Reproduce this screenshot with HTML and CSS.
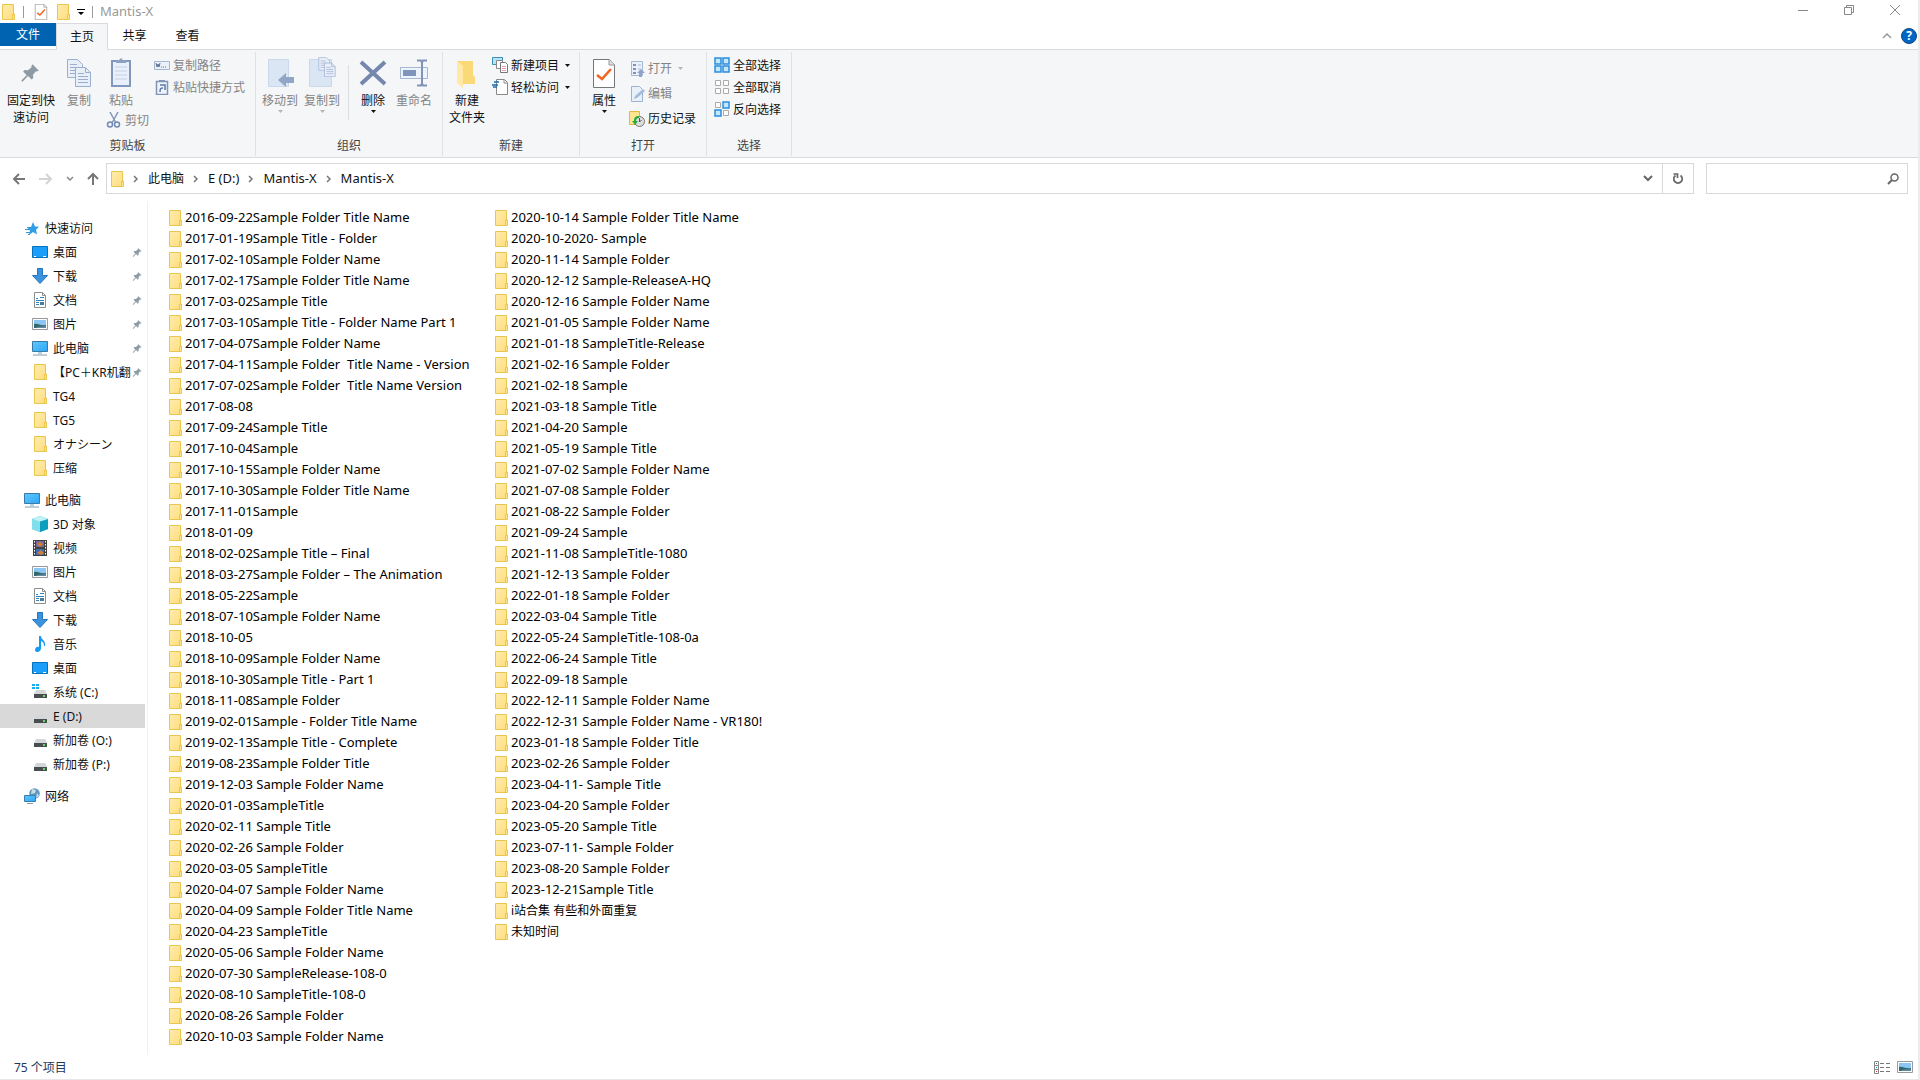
FILE: index.html
```html
<!DOCTYPE html>
<html lang="zh-CN">
<head>
<meta charset="utf-8">
<title>Mantis-X</title>
<link rel="stylesheet" href="styles.css">
</head>
<body>
<svg class="defs" aria-hidden="true">
  <linearGradient id="gold" x1="0" y1="0" x2="1" y2="1"><stop offset="0" stop-color="#ffebae"/><stop offset="1" stop-color="#ffde7c"/></linearGradient>
  <linearGradient id="screen" x1="0" y1="0" x2="1" y2="1"><stop offset="0" stop-color="#5fc8ff"/><stop offset="1" stop-color="#2fa5f5"/></linearGradient>
  <symbol id="folder" viewBox="0 0 16 16"><path d="M2.500.5h11v9.500h1v5.500h-12z" fill="url(#gold)" stroke="#e8c650"/><path d="M12.500 15v-4.500h2V15" fill="#ffe58f" stroke="#e8c650"/></symbol>
  <symbol id="pin" viewBox="0 0 16 16"><path d="M10 1l5 5-1.500.8-.8-.3-2.300 2.800.2 2.700-1.300 1.200-2.900-2.900L2 15l-1-1 4.300-4.300L2.500 6.800l1.200-1.300 2.700.2L9.300 3.300 9 2.500z" fill="#8e9ba4"/></symbol>
  <symbol id="desktop" viewBox="0 0 16 16"><path d="M.5 2.500h15v11H.5z" fill="#1aa0fb" stroke="#0670b8"/><path d="M2 12.500h2m7 0h3" stroke="#fff"/></symbol>
  <symbol id="down" viewBox="0 0 16 16"><path d="M5.500.5h5v7h5L8 15.500.5 7.500h5z" fill="#3b93e0" stroke="#2474ba"/></symbol>
  <symbol id="doc" viewBox="0 0 16 16"><path d="M2.500.5h8l3 3v12h-11z" fill="#fff" stroke="#8d8d8d"/><path d="M10.500.5v3h3" fill="none" stroke="#8d8d8d"/><path d="M4 6.500h2m2-1h4M4 8.500h8m-8 2h3m-3 2h3" stroke="#3185c0"/><path d="M8 10h4v3H8z" fill="#477c94"/></symbol>
  <symbol id="picture" viewBox="0 0 16 16"><path d="M.5 2.500h15v11H.5z" fill="#fff" stroke="#969ba0"/><path d="M2 4h12v8H2z" fill="#8cc7f4"/><path d="M2 8c4-1 6 2 12 1v3H2z" fill="#31686b"/><path d="M5 11c3-1 5 0 9-1v2H4z" fill="#6389a0"/></symbol>
  <symbol id="pc" viewBox="0 0 16 16"><path d="M.5 1.500h15v10H.5z" fill="url(#screen)" stroke="#3a7ba5"/><path d="M6 13h4" stroke="#69a9cc"/><path d="M1 15h14" stroke="#829aab"/></symbol>
  <symbol id="cube" viewBox="0 0 16 16"><path d="M8 0l8 3v10l-8 3-8-3V3z" fill="#2cb7cf"/><path d="M0 3l8 2v11l-8-3z" fill="#80dfea"/><path d="M8 5l8-2v10l-8 3z" fill="#0b9fbd"/><path d="M0 3l8-3 8 3-8 2.500z" fill="#c2f2f7"/></symbol>
  <symbol id="film" viewBox="0 0 16 16"><path d="M1 0h14v16H1z" fill="#404040"/><path d="M4 1h8v6H4z" fill="#76699b"/><path d="M4 9h8v6H4z" fill="#406dae"/><path d="M5 4l3-2 3 2-3 3zM5 13l4-3 3 3-3 2z" fill="#d47d39"/><path d="M2.500 1v15m11-15v15" stroke="#fff" stroke-dasharray="1.500"/></symbol>
  <symbol id="music" viewBox="0 0 16 16"><path d="M7 0h2c0 4 5 4 4 10h-1c0-3-1-4-3-5v7c0 5-6 5-6 2s3-4 4-3z" fill="#159bf2"/></symbol>
  <symbol id="drive" viewBox="0 0 16 16"><path d="M4 7h9l2 4H2z" fill="#d4d6d8"/><path d="M2 11h13v4H2z" fill="#4a4d50"/><path d="M11 12h2v2h-2z" fill="#62dd61"/></symbol>
  <symbol id="sysdrive" viewBox="0 0 16 16"><path d="M0 0h3v2H0zm4 0h3v2H4zM0 3h3v2H0zm4 0h3v2H4z" fill="#12aef0"/><path d="M4 6h9l2 4H2z" fill="#d4d6d8"/><path d="M2 10h13v4H2z" fill="#4a4d50"/><path d="M11 11h2v2h-2z" fill="#62dd61"/></symbol>
  <symbol id="star" viewBox="0 0 16 16"><path d="M9 2l2 4.500 4 .3-3 3 1 4.700-4-2.500L5 15l1-4.500-3-3L7 7z" fill="#2e9ee8"/><path d="M1 9.500h5M3 7.500h4M2 12.500h4M4 14.500h2" stroke="#3a96d1"/></symbol>
  <symbol id="network" viewBox="0 0 16 16"><circle cx="10.500" cy="5.500" r="5.300" fill="#6198bb"/><path d="M8 1l4 1-1 3-4 1zM13 5l2 3-3 2z" fill="#c5dde8"/><path d="M.5 7.500h11v6H.5z" fill="url(#screen)" stroke="#377fac"/><path d="M3 15.500h6" stroke="#85a1b5"/></symbol>
  <symbol id="check" viewBox="0 0 22 29"><path d="M.5.5h16l5 5v23H.5z" fill="#fff" stroke="#777"/><path d="M16 0v6h6" fill="#ddd" stroke="#999"/><path d="M4 16l5 4 9-10" fill="none" stroke="#f26522" stroke-width="2.600"/></symbol>
  <symbol id="pages" viewBox="0 0 24 28"><path d="M.5.5h10l5 5v13H.5z" fill="#e8eff9" stroke="#9caed0"/><path d="M3 5.500h7M3 8.500h9M3 11.500h6M3 14.500h6" stroke="#9caed0"/><path d="M8.500 8.500h10l5 5v14h-15z" fill="#e8eff9" stroke="#9caed0"/><path d="M18.500 8.500v5h5M11 14.500h6M11 17.500h10M11 20.500h10M11 23.500h10" fill="none" stroke="#9caed0"/></symbol>
  <symbol id="caret" viewBox="0 0 5 3"><path d="M0 0h5L2.500 3z" fill="currentColor"/></symbol>
  <symbol id="chev" viewBox="0 0 6 8"><path d="M1 1l3 3-3 3" fill="none" stroke="#777" stroke-width="1.500"/></symbol>
</svg>
<div class="window">
  <header class="titlebar">
    <div class="quick">
      <svg class="i16"><use href="#folder"/></svg><span class="bar"></span>
      <svg class="i16"><use href="#check"/></svg><svg class="i16"><use href="#folder"/></svg>
      <svg class="i8" viewBox="0 0 8 6"><path d="M0 0h8v1H0zM1 3h6L4 6z"/></svg><span class="bar"></span>
      <h1>Mantis-X</h1>
    </div>
    <div class="controls">
      <button aria-label="最小化"><svg viewBox="0 0 10 10"><path d="M0 5.500h10"/></svg></button>
      <button aria-label="还原"><svg viewBox="0 0 10 10"><path d="M.5 2.500h7v7h-7zM2.500 2.500v-2h7v7h-2"/></svg></button>
      <button aria-label="关闭"><svg viewBox="0 0 10 10"><path d="M0 0l10 10M10 0L0 10"/></svg></button>
    </div>
  </header>
  <div class="tabs">
    <button class="tab file">文件</button><button class="tab active">主页</button><button class="tab">共享</button><button class="tab">查看</button>
    <div class="help"><button aria-label="折叠功能区"><svg width="10" height="6" viewBox="0 0 10 6"><path d="M1 5l4-4 4 4" fill="none" stroke="#999" stroke-width="1.500"/></svg></button><button class="question" aria-label="帮助">?</button></div>
  </div>
  <div class="ribbon">
    <section class="group clip"><div class="tools">
      <button class="big pinbtn"><svg class="i32" viewBox="-5 -6 32 32"><use href="#pin" width="20" height="22"/></svg><span>固定到快<br>速访问</span></button>
      <button class="big" disabled><svg class="i32" viewBox="-4 -3 32 32"><use href="#pages" width="24" height="28"/></svg><span>复制</span></button>
      <div class="paste">
        <button class="big" disabled><svg class="i32" viewBox="0 0 32 32"><path d="M7 5h18v25H7z" fill="#e9f0fa" stroke="#8297bd" stroke-width="2"/><path d="M11 7V4h3l2-2 2 2h3v3z" fill="#8ea0c0"/><path d="M10 11h12m-12 4h12m-12 4h12m-12 4h12" stroke="#c4d1e5"/></svg><span>粘贴</span></button>
        <button class="small" disabled><svg class="i16" viewBox="0 0 16 16"><path d="M4 0l6 11M12 0L6 11" stroke="#8297b8" stroke-width="1.500"/><circle cx="4" cy="12.500" r="2.500" fill="none" stroke="#7189b5" stroke-width="1.500"/><circle cx="11" cy="12.500" r="2.500" fill="none" stroke="#7189b5" stroke-width="1.500"/></svg>剪切</button>
      </div>
      <div class="stack">
        <button class="small" disabled><svg class="i16" viewBox="0 0 16 16"><path d="M.5 4.500h15v8H.5z" fill="#e9f1fa" stroke="#a3b6d2"/><path d="M2 6l1 4 1-3 1 3 1-4m1 4h1m1 0h1m1 0h1" fill="none" stroke="#5b7190"/></svg>复制路径</button>
        <button class="small" disabled><svg class="i16" viewBox="0 0 16 16"><path d="M2.500 2.500h11v13h-11z" fill="#eef4fc" stroke="#8094b7" stroke-width="1.500"/><path d="M5 1h6v2H5z" fill="#8094b7"/><path d="M6 13c0-4 1-4 3-4M6 6h5v5" fill="none" stroke="#5c78a5" stroke-width="1.500"/></svg>粘贴快捷方式</button>
      </div></div><h2>剪贴板</h2></section>
    <section class="group org"><div class="tools">
      <button class="big" disabled><svg class="i32" viewBox="0 0 32 32"><path d="M4.500 3.500h20v27h-20z" fill="#dbe6f5" stroke="#cbd8ec"/><path d="M14 24l8-7v4h8v6h-8v4z" fill="#91a5c6"/></svg><span>移动到</span><svg class="caret"><use href="#caret"/></svg></button>
      <button class="big" disabled><svg class="i32" viewBox="0 0 32 32"><path d="M3.500 3.500h22v27h-22z" fill="#dbe6f5" stroke="#cbd8ec"/><use href="#pages" x="12" y="1" width="18" height="20"/></svg><span>复制到</span><svg class="caret"><use href="#caret"/></svg></button>
      <span class="rule"></span>
      <button class="big delete"><svg class="i32" viewBox="0 0 32 32"><path d="M4 6l24 22M28 6L4 28" stroke="#7587ad" stroke-width="4"/></svg><span>删除</span><svg class="caret"><use href="#caret"/></svg></button>
      <button class="big" disabled><svg class="i32" viewBox="0 0 32 32"><path d="M2.500 11.500h27v11h-27z" fill="#eef4fc" stroke="#a6b7d3"/><path d="M5 14h13v6H5z" fill="#7e94bb"/><path d="M19 4.500h4l1 2 1-2h4M24 6v22m-5 1.500h4l1-2 1 2h4" fill="none" stroke="#8094ba" stroke-width="2"/></svg><span>重命名</span></button>
      </div><h2>组织</h2></section>
    <section class="group new"><div class="tools">
      <button class="big"><svg class="i32" viewBox="0 0 32 32"><path d="M6 5h16v14l2 2v7H11z" fill="#fad978"/><path d="M6 5l6 5v22l-6-5z" fill="#ffe9a5"/></svg><span>新建<br>文件夹</span></button>
      <div class="stack">
        <button class="small"><svg class="i16" viewBox="0 0 16 16"><path d="M.5.5h10v7H.5z" fill="#b7e4f4" stroke="#3990b6"/><path d="M4.500 3.500h6v8h-6z" fill="#fff" stroke="#888"/><path d="M8.500 5.500h5l2 2v8h-7z" fill="#fff" stroke="#777"/><path d="M10 9.500h4m-4 2h4m-4 2h4" stroke="#db9cad"/></svg>新建项目<svg class="caret"><use href="#caret"/></svg></button>
        <button class="small"><svg class="i16" viewBox="0 0 16 16"><path d="M4.500.5h8l3 3v12h-11z" fill="#fff" stroke="#888"/><path d="M12 1v3h3" fill="none" stroke="#888"/><path d="M2 3h5M0 6h6M1 8h4" stroke="#176cb2" stroke-width="1.500"/></svg>轻松访问<svg class="caret"><use href="#caret"/></svg></button>
      </div></div><h2>新建</h2></section>
    <section class="group open"><div class="tools">
      <button class="big"><svg class="i32" viewBox="-5 -3 32 32"><use href="#check" width="22" height="29"/></svg><span>属性</span><svg class="caret"><use href="#caret"/></svg></button>
      <div class="stack loose">
        <button class="small" disabled><svg class="i16" viewBox="0 0 16 16"><path d="M2.500.5h11v14h-11z" fill="#eaf1fb" stroke="#a5b7d3"/><path d="M4 3h3v2H4zm0 4h3v2H4zm0 4h3v2H4z" fill="#7c94bd"/><path d="M9 4h3M9 8h3" stroke="#a5b7d3"/><path d="M12 8l4 4h-3v4h-3v-4H8z" fill="#8fa4c7"/></svg>打开<svg class="caret"><use href="#caret"/></svg></button>
        <button class="small" disabled><svg class="i16" viewBox="0 0 16 16"><path d="M2.500.5h8l3 3v12h-11z" fill="#e8f0fa" stroke="#9fb2d1"/><path d="M5 13l1-3 8-7 2 2-8 7z" fill="#a7bcda"/></svg>编辑</button>
        <button class="small"><svg class="i16" viewBox="0 0 16 16"><path d="M.5.5h10v13H.5z" fill="#ffe58f" stroke="#e1b93f"/><circle cx="10.500" cy="10.500" r="5" fill="#ddd" stroke="#777"/><path d="M10.500 7v4l2-2" fill="none" stroke="#555"/><path d="M10 5c-4 0-5 2-5 5H3l3 4 3-4H7c0-2 1-3 3-3z" fill="#29ad3a"/></svg>历史记录</button>
      </div></div><h2>打开</h2></section>
    <section class="group select"><div class="tools"><div class="stack">
        <button class="small"><svg class="i16" viewBox="0 0 16 16"><path d="M1 1h6v6H1zm8 0h6v6H9zM1 9h6v6H1zm8 0h6v6H9z" fill="#c3e7fd" stroke="#2b8ddc" stroke-width="1.500"/></svg>全部选择</button>
        <button class="small"><svg class="i16" viewBox="0 0 16 16"><path d="M1.500 1.500h5v5h-5zm8 0h5v5h-5zM1.500 9.500h5v5h-5zm8 0h5v5h-5z" fill="#fff" stroke="#aaa"/></svg>全部取消</button>
        <button class="small"><svg class="i16" viewBox="0 0 16 16"><path d="M1.500 1.500h5v5h-5zm8 8h5v5h-5z" fill="#fff" stroke="#aaa"/><path d="M9 1h6v6H9zM1 9h6v6H1z" fill="#c3e7fd" stroke="#2b8ddc" stroke-width="1.500"/></svg>反向选择</button>
      </div></div><h2>选择</h2></section>
  </div>
  <div class="address">
    <div class="history">
      <button aria-label="后退"><svg width="14" height="12" viewBox="0 0 14 12"><path d="M13 6H2m5-5L2 6l5 5" fill="none" stroke="#777" stroke-width="2"/></svg></button>
      <button aria-label="前进"><svg width="14" height="12" viewBox="0 0 14 12"><path d="M0 6h12M7 1l5 5-5 5" fill="none" stroke="#d5d5d5" stroke-width="2"/></svg></button>
      <button aria-label="最近位置"><svg width="8" height="6" viewBox="0 0 8 6"><path d="M1 1l3 3 3-3" fill="none" stroke="#888" stroke-width="1.500"/></svg></button>
      <button aria-label="上移"><svg width="12" height="13" viewBox="0 0 12 13"><path d="M6 13V2M1 7l5-5 5 5" fill="none" stroke="#777" stroke-width="2"/></svg></button>
    </div>
    <nav class="crumbs" aria-label="路径">
      <svg class="i16"><use href="#folder"/></svg><svg class="chev"><use href="#chev"/></svg><a href="#">此电脑</a><svg class="chev"><use href="#chev"/></svg><a href="#">E (D:)</a><svg class="chev"><use href="#chev"/></svg><a href="#">Mantis-X</a><svg class="chev"><use href="#chev"/></svg><a href="#">Mantis-X</a>
      <button class="drop" aria-label="以前的位置"><svg width="10" height="7" viewBox="0 0 10 7"><path d="M1 1l4 4 4-4" fill="none" stroke="#666" stroke-width="2"/></svg></button>
      <button class="refresh" aria-label="刷新"><svg width="12" height="12" viewBox="0 0 12 12"><path d="M8.500 2.500a4.200 4.200 0 1 1-5 0M1.500 1h4v4" fill="none" stroke="#666" stroke-width="1.700"/></svg></button>
    </nav>
    <label class="search"><input type="search" aria-label="搜索"><svg width="12" height="12" viewBox="0 0 12 12"><circle cx="7.500" cy="4.500" r="3.500" fill="none" stroke="#666" stroke-width="1.500"/><path d="M5 7L1 11" stroke="#666" stroke-width="2"/></svg></label>
  </div>
  <main>
    <nav class="tree" aria-label="导航窗格">
      <ul>
        <li class="root"><svg class="i16"><use href="#star"/></svg><a href="#">快速访问</a></li>
        <li><svg class="i16"><use href="#desktop"/></svg><a href="#">桌面</a><svg class="pin"><use href="#pin"/></svg></li>
        <li><svg class="i16"><use href="#down"/></svg><a href="#">下载</a><svg class="pin"><use href="#pin"/></svg></li>
        <li><svg class="i16"><use href="#doc"/></svg><a href="#">文档</a><svg class="pin"><use href="#pin"/></svg></li>
        <li><svg class="i16"><use href="#picture"/></svg><a href="#">图片</a><svg class="pin"><use href="#pin"/></svg></li>
        <li><svg class="i16"><use href="#pc"/></svg><a href="#">此电脑</a><svg class="pin"><use href="#pin"/></svg></li>
        <li><svg class="i16"><use href="#folder"/></svg><a href="#">【PC＋KR机翻</a><svg class="pin"><use href="#pin"/></svg></li>
        <li><svg class="i16"><use href="#folder"/></svg><a href="#">TG4</a></li>
        <li><svg class="i16"><use href="#folder"/></svg><a href="#">TG5</a></li>
        <li><svg class="i16"><use href="#folder"/></svg><a href="#">オナシーン</a></li>
        <li><svg class="i16"><use href="#folder"/></svg><a href="#">压缩</a></li>
      </ul>
      <ul>
        <li class="root"><svg class="i16"><use href="#pc"/></svg><a href="#">此电脑</a></li>
        <li><svg class="i16"><use href="#cube"/></svg><a href="#">3D 对象</a></li>
        <li><svg class="i16"><use href="#film"/></svg><a href="#">视频</a></li>
        <li><svg class="i16"><use href="#picture"/></svg><a href="#">图片</a></li>
        <li><svg class="i16"><use href="#doc"/></svg><a href="#">文档</a></li>
        <li><svg class="i16"><use href="#down"/></svg><a href="#">下载</a></li>
        <li><svg class="i16"><use href="#music"/></svg><a href="#">音乐</a></li>
        <li><svg class="i16"><use href="#desktop"/></svg><a href="#">桌面</a></li>
        <li><svg class="i16"><use href="#sysdrive"/></svg><a href="#">系统 (C:)</a></li>
        <li class="current"><svg class="i16"><use href="#drive"/></svg><a href="#">E (D:)</a></li>
        <li><svg class="i16"><use href="#drive"/></svg><a href="#">新加卷 (O:)</a></li>
        <li><svg class="i16"><use href="#drive"/></svg><a href="#">新加卷 (P:)</a></li>
      </ul>
      <ul><li class="root"><svg class="i16"><use href="#network"/></svg><a href="#">网络</a></li></ul>
    </nav>
    <ul class="files" id="files"></ul>
  </main>
  <footer><span>75 个项目</span>
    <div class="views"><button aria-label="详细信息"><svg width="17" height="13" viewBox="0 0 17 13"><path d="M.5.5h4v12h-4zM.5 4.500h4m-4 4h4" fill="#fff" stroke="#888"/><path d="M6 2.500h4m2 0h4m-10 4h4m2 0h4m-10 4h4m2 0h4" stroke="#777"/><path d="M2 2h1v1H2z" fill="#2b8a57"/><path d="M2 6h1v1H2z" fill="#28c"/><path d="M2 10h1v1H2z" fill="#d33"/></svg></button><button aria-label="大图标"><svg class="i16"><use href="#picture"/></svg></button></div>
  </footer>
</div>
<script src="files.js"></script>
</body>
</html>
```

FILE: files.js
```js
const names = [
  "2016-09-22Sample Folder Title Name", "2017-01-19Sample Title - Folder", "2017-02-10Sample Folder Name",
  "2017-02-17Sample Folder Title Name", "2017-03-02Sample Title", "2017-03-10Sample Title - Folder Name Part 1",
  "2017-04-07Sample Folder Name", "2017-04-11Sample Folder  Title Name - Version", "2017-07-02Sample Folder  Title Name Version",
  "2017-08-08", "2017-09-24Sample Title", "2017-10-04Sample", "2017-10-15Sample Folder Name",
  "2017-10-30Sample Folder Title Name", "2017-11-01Sample", "2018-01-09", "2018-02-02Sample Title – Final",
  "2018-03-27Sample Folder – The Animation", "2018-05-22Sample", "2018-07-10Sample Folder Name", "2018-10-05",
  "2018-10-09Sample Folder Name", "2018-10-30Sample Title - Part 1", "2018-11-08Sample Folder",
  "2019-02-01Sample - Folder Title Name", "2019-02-13Sample Title - Complete", "2019-08-23Sample Folder Title",
  "2019-12-03 Sample Folder Name", "2020-01-03SampleTitle", "2020-02-11 Sample Title", "2020-02-26 Sample Folder",
  "2020-03-05 SampleTitle", "2020-04-07 Sample Folder Name", "2020-04-09 Sample Folder Title Name",
  "2020-04-23 SampleTitle", "2020-05-06 Sample Folder Name", "2020-07-30 SampleRelease-108-0",
  "2020-08-10 SampleTitle-108-0", "2020-08-26 Sample Folder", "2020-10-03 Sample Folder Name",
  "2020-10-14 Sample Folder Title Name", "2020-10-2020- Sample", "2020-11-14 Sample Folder",
  "2020-12-12 Sample-ReleaseA-HQ", "2020-12-16 Sample Folder Name", "2021-01-05 Sample Folder Name",
  "2021-01-18 SampleTitle-Release", "2021-02-16 Sample Folder", "2021-02-18 Sample", "2021-03-18 Sample Title",
  "2021-04-20 Sample", "2021-05-19 Sample Title", "2021-07-02 Sample Folder Name", "2021-07-08 Sample Folder",
  "2021-08-22 Sample Folder", "2021-09-24 Sample", "2021-11-08 SampleTitle-1080", "2021-12-13 Sample Folder",
  "2022-01-18 Sample Folder", "2022-03-04 Sample Title", "2022-05-24 SampleTitle-108-0a", "2022-06-24 Sample Title",
  "2022-09-18 Sample", "2022-12-11 Sample Folder Name", "2022-12-31 Sample Folder Name - VR180!",
  "2023-01-18 Sample Folder Title", "2023-02-26 Sample Folder", "2023-04-11- Sample Title", "2023-04-20 Sample Folder",
  "2023-05-20 Sample Title", "2023-07-11- Sample Folder", "2023-08-20 Sample Folder", "2023-12-21Sample Title",
  "i站合集 有些和外面重复", "未知时间"
];
const list = document.getElementById("files");
for (const name of names) {
  const item = document.createElement("li");
  item.innerHTML = '<svg class="i16"><use href="#folder"/></svg><a href="#"></a>';
  item.querySelector("a").textContent = name;
  list.append(item);
}
```

FILE: styles.css
```css
* { box-sizing: border-box; margin: 0; padding: 0; }
body { font: 12px/17px "Noto Sans", "Noto Sans CJK SC", sans-serif; color: #111; background: #fff; }
ul { list-style: none; }
a { color: inherit; text-decoration: none; white-space: pre; }
button { border: 0; background: none; font: inherit; color: inherit; }
svg { flex: none; display: block; }
.defs { position: absolute; width: 0; height: 0; }
.i16 { width: 16px; height: 16px; }
.i32 { width: 32px; height: 32px; }
.i8 { width: 8px; height: 6px; }
.caret { width: 5px; height: 3px; }
.chev { width: 6px; height: 8px; }
.window { min-height: 100vh; display: flex; flex-direction: column; border-right: 2px solid #ececec; border-bottom: 1px solid #e6e6e6; }

.titlebar { height: 23px; display: flex; justify-content: space-between; }
.quick { display: flex; align-items: center; gap: 6px; }
.quick .bar { width: 1px; height: 12px; background: #999; margin: 0 3px 0 1px; }
.quick h1 { font-size: 13px; font-weight: 400; color: #999; margin-left: -2px; }
.controls { display: flex; }
.controls button { width: 46px; height: 20px; display: grid; place-items: center; }
.controls svg { width: 10px; height: 10px; fill: none; stroke: #888; }

.tabs { height: 27px; display: flex; border-bottom: 1px solid #d9dbdd; }
.tab { width: 53px; height: 27px; padding-bottom: 2px; }
.tab.file { width: 56px; height: 23px; padding: 0; background: #0063b1; color: #fff; }
.tab.active { width: 52px; background: #f5f6f7; border: 1px solid #d9dbdd; border-bottom: 0; }
.help { margin-left: auto; display: flex; align-items: center; gap: 9px; padding-right: 1px; }
.question { width: 16px; height: 16px; border-radius: 8px; border: 1px solid #12477c; background: #0067c7; color: #fff; font-weight: 700; line-height: 14px; }

.ribbon { height: 108px; display: flex; background: #f5f6f7; border-bottom: 1px solid #d9dbdd; }
.group { height: 104px; margin-top: 2px; border-right: 1px solid #dfe1e3; display: flex; flex-direction: column; justify-content: space-between; }
.group h2 { font-size: 12px; font-weight: 400; color: #444; text-align: center; padding-bottom: 2px; }
.clip { width: 256px; }
.org { width: 187px; }
.new { width: 137px; }
.open { width: 127px; }
.select { width: 85px; }
.tools { display: flex; padding: 2px 3px 0; }
.clip .tools { padding-left: 4px; }
.big { width: 42px; display: flex; flex-direction: column; align-items: center; white-space: nowrap; padding-top: 2px; }
.big span { margin-top: 4px; }
.big .caret { margin-top: 1px; }
.big.pinbtn { width: 54px; }
.big.delete { width: 40px; }
.paste { width: 52px; }
.paste .big { width: 42px; }
.small { height: 22px; display: flex; align-items: center; gap: 3px; white-space: nowrap; }
.small .caret { margin-left: 3px; }
.paste .small { padding-left: 6px; }
.stack { padding-left: 4px; }
.clip .stack { padding-left: 2px; }
.loose { padding-top: 2px; }
.loose .small { height: 25px; }
button:disabled { color: #848484; }
button:disabled .caret { color: #b4b4b4; }
.rule { width: 1px; height: 55px; background: #dcdee0; margin: 11px 4px 0 5px; }

.address { height: 43px; display: flex; align-items: flex-start; padding: 5px 10px 0 12px; }
.history { width: 94px; height: 31px; display: flex; align-items: center; justify-content: space-between; padding-right: 7px; }
.crumbs { flex: 1; height: 31px; display: flex; align-items: center; gap: 9px; border: 1px solid #d9d9d9; padding-left: 2px; font-size: 13px; }
.crumbs .i16 { margin-right: -1px; }
.crumbs a:nth-of-type(1) { font-size: 12px; }
.drop { margin-left: auto; width: 10px; display: grid; place-items: center; }
.refresh { width: 31px; height: 29px; border-left: 1px solid #d9d9d9; display: grid; place-items: center; }
.search { width: 202px; height: 31px; margin-left: 12px; display: flex; align-items: center; border: 1px solid #d9d9d9; padding-right: 8px; }
.search input { flex: 1; min-width: 0; border: 0; outline: 0; font: inherit; }

main { flex: 1; display: flex; }
.tree { width: 148px; border-right: 1px solid #f0f0f0; padding-top: 15px; }
.tree ul { margin-bottom: 8px; }
.tree li { height: 24px; margin-right: 2px; padding: 0 3px 0 32px; display: flex; align-items: center; gap: 5px; }
.tree .root { padding-left: 24px; }
.tree .current { background: #d9d9d9; }
.pin { width: 10px; height: 11px; margin-left: auto; }
.tree li .pin { margin-left: auto; }
.tree a { min-width: 0; }
.files { display: grid; grid-auto-flow: column; grid-template-rows: repeat(40, 21px); grid-auto-columns: 326px; padding: 6px 0 0 19px; font-size: 13px; color: #000; }
.files li { display: flex; align-items: center; gap: 2px; }
.files li:nth-last-child(-n+2) { font-size: 12px; }

footer { height: 24px; display: flex; align-items: center; justify-content: space-between; padding: 0 5px 0 14px; color: #1e395b; }
.views { display: flex; align-items: center; gap: 6px; }
```
